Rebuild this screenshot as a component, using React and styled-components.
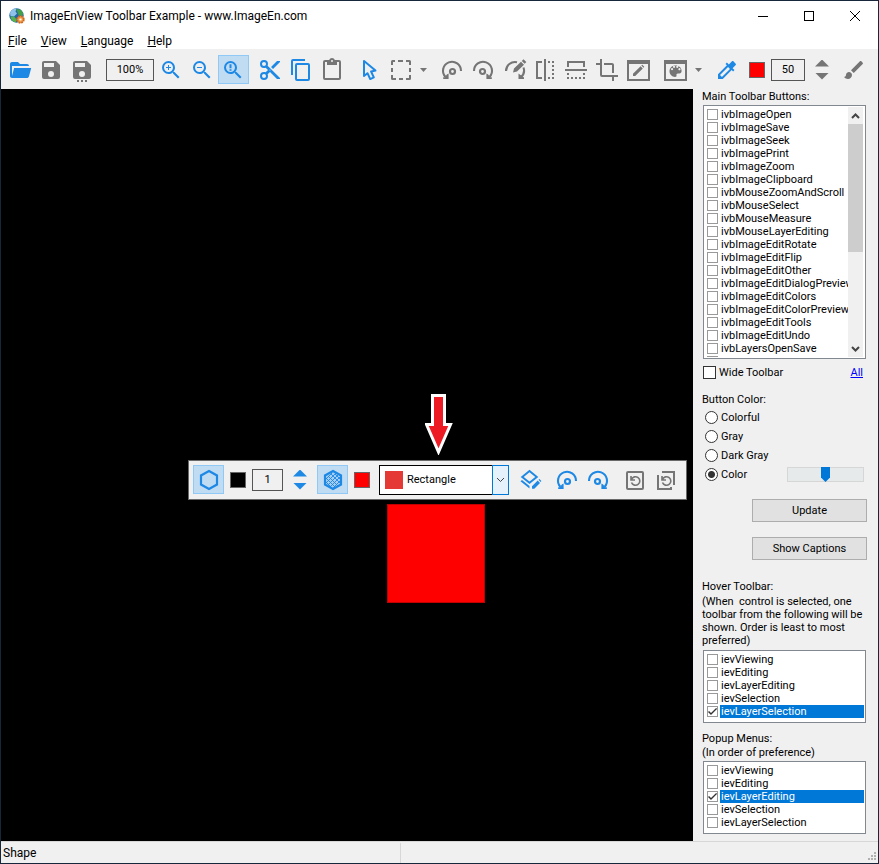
import { useState } from "react";
import styled, { createGlobalStyle, css } from "styled-components";

const BLUE = "#1e88e5";
const GRAY = "#757575";

const GlobalStyle = createGlobalStyle`
  * {
    box-sizing: border-box;
  }
  body {
    margin: 0;
    font-family: Roboto, "Liberation Sans", sans-serif;
    font-size: 11px;
    line-height: 13px;
    color: #000;
  }
  button, input, select {
    font: inherit;
    color: inherit;
    margin: 0;
    padding: 0;
  }
`;

const Window = styled.div`
  display: flex;
  flex-direction: column;
  min-height: 100vh;
  border: 1px solid #17263a;
  background-color: #f0f0f0;
`;

const TitleBar = styled.header`
  display: flex;
  align-items: center;
  height: 30px;
  padding-left: 8px;
  background-color: #fff;
`;

const Title = styled.h1`
  flex: 1;
  margin: 0 0 0 5px;
  font-size: 12px;
  font-weight: 400;
  line-height: 16px;
`;

const WindowButton = styled.button`
  display: flex;
  align-items: center;
  justify-content: center;
  width: 46px;
  height: 30px;
  border: 0;
  background: none;
`;

const MenuBar = styled.nav`
  display: flex;
  align-items: center;
  gap: 14px;
  height: 18px;
  padding: 2px 0 0 7px;
  background-color: #fff;
  font-size: 12px;
  line-height: 16px;
`;

const MenuItem = styled.button`
  border: 0;
  background: none;
  &::first-letter {
    text-decoration: underline;
  }
`;

const Toolbar = styled.div`
  display: flex;
  align-items: center;
  gap: 6px;
  height: 40px;
  padding: 6px 4px 5px;
`;

const Group = styled.div`
  display: flex;
  align-items: center;
  gap: ${(p) => p.$gap || 0}px;
  padding-left: ${(p) => p.$left || 0}px;
`;

const ToolButton = styled.button`
  display: flex;
  width: 31px;
  height: 29px;
  padding: 2px;
  border: 1px solid ${(p) => (p.$active ? "#90c8f6" : "transparent")};
  background-color: ${(p) => (p.$active ? "#c0dcf3" : "transparent")};
  color: ${(p) => (p.$gray ? GRAY : BLUE)};
`;

const DropButton = styled.button`
  display: flex;
  align-items: center;
  justify-content: center;
  width: 15px;
  height: 29px;
  border: 0;
  background: none;
  color: ${GRAY};
`;

const ValueBox = styled.input`
  width: ${(p) => p.$width}px;
  height: 22px;
  border: 1px solid #555;
  background-color: #f0f0f0;
  text-align: center;
`;

const Swatch = styled.button`
  width: 16px;
  height: 16px;
  border: 1px solid #666;
  background-color: ${(p) => p.$color};
`;

const Spinner = styled.div`
  display: flex;
  flex-direction: column;
  gap: 6px;
  margin: 0 4px;
  color: ${(p) => (p.$gray ? GRAY : BLUE)};
`;

const SpinButton = styled.button`
  width: 14px;
  height: 7px;
  border: 0;
  background-color: currentColor;
  color: inherit;
  clip-path: ${(p) =>
    p.$down
      ? "polygon(0 0, 100% 0, 50% 100%)"
      : "polygon(50% 0, 100% 100%, 0 100%)"};
`;

const Main = styled.main`
  display: flex;
  flex: 1;
`;

const Canvas = styled.section`
  position: relative;
  flex: 1;
  min-width: 0;
  overflow: hidden;
  background-color: #000;
`;

const Shape = styled.div`
  position: absolute;
  left: 386px;
  top: 415px;
  width: 98px;
  height: 99px;
  border: 1px solid #c00000;
  background-color: #f00;
`;

const Pointer = styled.svg`
  position: absolute;
  left: 424px;
  top: 305px;
`;

const HoverToolbar = styled.div`
  position: absolute;
  left: 187px;
  top: 371px;
  display: flex;
  align-items: center;
  gap: 6px;
  height: 40px;
  padding: 4px 4px 5px;
  border: 1px solid #696969;
  background-color: #f0f0f0;
`;

const Combo = styled.label`
  display: flex;
  align-items: center;
  width: 130px;
  height: 30px;
  margin-left: 3px;
  border: 1px solid #000;
  background-color: #fff;
`;

const ComboColor = styled.span`
  width: 18px;
  height: 18px;
  margin: 0 4px 0 5px;
  background-color: #e53935;
`;

const ComboSelect = styled.select`
  flex: 1;
  min-width: 0;
  height: 28px;
  border: 0;
  outline: 0;
  appearance: none;
  background: none;
`;

const ComboArrow = styled.span`
  display: flex;
  align-items: center;
  justify-content: center;
  width: 17px;
  height: 30px;
  margin-right: -1px;
  border: 1px solid #0078d7;
  background-color: #e5f1fb;
`;

const Side = styled.aside`
  display: flex;
  flex-direction: column;
  width: 185px;
  padding: 1px 11px 7px 9px;
`;

const Label = styled.div`
  margin-top: ${(p) => p.$top || 0}px;
`;

const ListBox = styled.div`
  display: flex;
  height: ${(p) => p.$height}px;
  width: 163px;
  margin: ${(p) => p.$top}px 0 0 1px;
  padding: 1px;
  border: 1px solid #828790;
  background-color: #fff;
`;

const List = styled.ul`
  flex: 1;
  min-width: 0;
  margin: 0;
  padding: 1px 0 0;
  overflow: hidden;
  list-style: none;
`;

const ListRow = styled.label`
  display: flex;
  align-items: center;
  gap: 2px;
  height: 13px;
  padding-left: 2px;
  white-space: nowrap;
`;

const ListText = styled.span`
  flex: 1;
  padding-left: 1px;
  ${(p) =>
    p.$selected &&
    css`
      background-color: #0078d7;
      color: #fff;
    `}
`;

const tick = `url("data:image/svg+xml,%3Csvg xmlns='http://www.w3.org/2000/svg' viewBox='0 0 9 9'%3E%3Cpath d='M0.500 4.500l2.500 2.600L8.600 1.400' fill='none' stroke='%23333' stroke-width='1.4'/%3E%3C/svg%3E")`;

const Check = styled.input.attrs({ type: "checkbox" })`
  flex: none;
  appearance: none;
  width: ${(p) => p.$size || 11}px;
  height: ${(p) => p.$size || 11}px;
  border: 1px solid ${(p) => (p.$size ? "#333" : "#999")};
  background-color: #fff;
  &:checked {
    background-image: ${tick};
  }
`;

const ScrollBar = styled.div`
  display: flex;
  flex-direction: column;
  width: 15px;
  margin-right: 1px;
  background-color: #f0f0f0;
`;

const ScrollButton = styled.button`
  display: flex;
  align-items: center;
  justify-content: center;
  height: 17px;
  border: 0;
  background: none;
`;

const ScrollTrack = styled.div`
  flex: 1;
`;

const ScrollThumb = styled.div`
  height: 128px;
  background-color: #cdcdcd;
`;

const WideRow = styled.div`
  display: flex;
  align-items: center;
  justify-content: space-between;
  height: 13px;
  margin: 7px 4px 0 1px;
`;

const WideLabel = styled.label`
  display: flex;
  align-items: center;
  gap: 3px;
`;

const AllLink = styled.a`
  color: #00f;
`;

const ColorList = styled.div`
  margin-top: 2px;
`;

const ColorRow = styled.div`
  display: flex;
  align-items: center;
  justify-content: space-between;
  height: 19px;
  padding: 0 3px;
`;

const RadioLabel = styled.label`
  display: flex;
  align-items: center;
  gap: 3px;
`;

const Radio = styled.input.attrs({ type: "radio" })`
  appearance: none;
  width: 13px;
  height: 13px;
  border: 1px solid #333;
  border-radius: 50%;
  background-color: #fff;
  &:checked {
    background-image: radial-gradient(circle, #333 3px, transparent 4px);
  }
`;

const Slider = styled.input.attrs({ type: "range" })`
  appearance: none;
  width: 77px;
  height: 15px;
  border: 1px solid #d6d6d6;
  background-color: #e7eaea;
  &::-webkit-slider-thumb {
    appearance: none;
    width: 9px;
    height: 15px;
    background-color: #0078d7;
    clip-path: polygon(0 0, 100% 0, 100% 70%, 50% 100%, 0 70%);
  }
`;

const PushButton = styled.button`
  align-self: flex-end;
  width: 115px;
  height: 23px;
  margin: 15px 0 0;
  border: 1px solid #adadad;
  background-color: #e1e1e1;
`;

const Hint = styled.p`
  margin: ${(p) => p.$top}px 0 0;
  white-space: pre-wrap;
`;

const StatusBar = styled.footer`
  display: flex;
  align-items: center;
  height: 22px;
  border-top: 1px solid #d7d7d7;
`;

const StatusText = styled.div`
  width: 400px;
  padding: 3px 2px;
  border-right: 1px solid #d7d7d7;
  font-size: 12px;
  line-height: 14px;
`;

const Grip = styled.svg`
  align-self: flex-end;
  margin-left: auto;
`;

const SAVE =
  "M15,9H5V5H15M12,19A3,3 0 0,1 9,16A3,3 0 0,1 12,13A3,3 0 0,1 15,16A3,3 0 0,1 12,19M17,3H5C3.89,3 3,3.9 3,5V19A2,2 0 0,0 5,21H19A2,2 0 0,0 21,19V7L17,3Z";
const LENS =
  "M15.5,14L20.5,19L19,20.5L14,15.5V14.71L13.73,14.43C12.59,15.41 11.11,16 9.5,16A6.5,6.5 0 0,1 3,9.5A6.5,6.5 0 0,1 9.5,3A6.5,6.5 0 0,1 16,9.5C16,11.11 15.41,12.59 14.43,13.73L14.71,14H15.5M9.5,14C12,14 14,12 14,9.5C14,7 12,5 9.5,5C7,5 5,7 5,9.5C5,12 7,14 9.5,14";
const HEXAGON = "M13 3L21 7.5V16.500L13 21L5 16.500V7.500Z";

const paths = {
  open: "M19,20H4C2.89,20 2,19.1 2,18V6C2,4.89 2.89,4 4,4H10L12,6H19A2,2 0 0,1 21,8H4V18L6.14,10H23.21L20.93,18.5C20.7,19.37 19.92,20 19,20Z",
  save: SAVE,
  saveAs: SAVE + "M7 22h2v2H7zM11 22h2v2h-2zM15 22h2v2h-2z",
  zoomIn: LENS + "M12,10H10V12H9V10H7V9H9V7H10V9H12V10Z",
  zoomOut: LENS + "M7,9H12V10H7V9Z",
  zoomReset: LENS + "M8.5 6.3h2v4h-2zM8.5 11.2h2v1.6h-2z",
  cut: "M19,3L13,9L15,11L22,4V3M12,12.5A0.5,0.5 0 0,1 11.5,12A0.5,0.5 0 0,1 12,11.5A0.5,0.5 0 0,1 12.5,12A0.5,0.5 0 0,1 12,12.5M6,20A2,2 0 0,1 4,18C4,16.89 4.9,16 6,16A2,2 0 0,1 8,18C8,19.11 7.1,20 6,20M6,8A2,2 0 0,1 4,6C4,4.89 4.9,4 6,4A2,2 0 0,1 8,6C8,7.11 7.1,8 6,8M9.64,7.64C9.87,7.14 10,6.59 10,6A4,4 0 0,0 6,2A4,4 0 0,0 2,6A4,4 0 0,0 6,10C6.59,10 7.14,9.87 7.64,9.64L10,12L7.64,14.36C7.14,14.13 6.59,14 6,14A4,4 0 0,0 2,18A4,4 0 0,0 6,22A4,4 0 0,0 10,18C10,17.41 9.87,16.86 9.64,16.36L12,14L19,21H22V20L9.64,7.64Z",
  copy: "M19,21H8V7H19M19,5H8A2,2 0 0,0 6,7V21A2,2 0 0,0 8,23H19A2,2 0 0,0 21,21V7A2,2 0 0,0 19,5M16,1H4A2,2 0 0,0 2,3V17H4V3H16V1Z",
  paste:
    "M19,20H5V4H7V7H17V4H19M12,2A1,1 0 0,1 13,3A1,1 0 0,1 12,4A1,1 0 0,1 11,3A1,1 0 0,1 12,2M19,2H14.82C14.4,0.84 13.3,0 12,0C10.7,0 9.6,0.84 9.18,2H5A2,2 0 0,0 3,4V20A2,2 0 0,0 5,22H19A2,2 0 0,0 21,20V4A2,2 0 0,0 19,2Z",
  pointer:
    "M10.07,14.27C10.57,14.03 11.16,14.25 11.4,14.75L13.7,19.74L15.5,18.89L13.19,13.91C12.95,13.41 13.17,12.81 13.67,12.58L13.95,12.5L16.25,12.05L8,5.12V15.9L9.82,14.43L10.07,14.27M13.64,21.97C13.14,22.21 12.54,22 12.31,21.5L10.13,16.76L7.62,18.78C7.45,18.92 7.24,19 7,19A1,1 0 0,1 6,18V3A1,1 0 0,1 7,2C7.24,2 7.47,2.09 7.64,2.23L7.65,2.22L19.14,11.86C19.57,12.22 19.62,12.85 19.27,13.27C19.12,13.45 18.91,13.57 18.7,13.61L15.54,14.23L17.74,18.96C18,19.46 17.76,20.05 17.26,20.28L13.64,21.97Z",
  select:
    "M3 7V3.500Q3 2 4.500 2H7V4H5V7ZM10 2H15V4H10ZM18 2H21.500Q23 2 23 3.500V7H21V4H18ZM3 10H5V14H3ZM21 10H23V14H21ZM3 17H5V20H8V22H4.500Q3 22 3 20.500ZM11 20H15V22H11ZM23 17V20.500Q23 22 21.500 22H18V20H21V17Z",
  flipH:
    "M3 3H9V5H5V19H9V21H3ZM11 1H13V23H11ZM15 3h2v2h-2zM19 3h2v2h-2zM19 7h2v2h-2zM19 11h2v2h-2zM19 15h2v2h-2zM19 19h2v2h-2zM15 19h2v2h-2z",
  flipV:
    "M3 9V3H21V9H19V5H5V9ZM1 11H23V13H1ZM3 15h2v2H3zM3 19h2v2H3zM7 19h2v2H7zM11 19h2v2h-2zM15 19h2v2h-2zM19 19h2v2h-2zM19 15h2v2h-2z",
  crop: "M7,17V1H5V5H1V7H5V17A2,2 0 0,0 7,19H17V23H19V19H23V17M17,15H19V7C19,5.89 18.1,5 17,5H9V7H17V15Z",
  effects:
    "M1 2H24V23H1ZM3 6V21H22V6ZM7 18V15.8L14.6 8.200L16.800 10.400L9.200 18ZM15.300 7.500L16.300 6.700L18.300 8.700L17.500 9.700Z",
  palette:
    "M1 2H24V23H1ZM3 6V21H22V6ZM12.500 7.500C8.600 7.500 6.500 10.400 6.500 13.300C6.500 16.600 9.200 19 12 19C13.300 19 13.800 18.300 13.500 17.300C13.200 16.200 13.800 15.500 14.800 15.500H16.300C17.800 15.500 18.600 14.500 18.600 13C18.600 9.800 16 7.500 12.500 7.500ZM9 12.200a1.100 1.100 0 1 1 .1 0zM11 9.900a1.100 1.100 0 1 1 .1 0zM14.200 9.900a1.100 1.100 0 1 1 .1 0zM16.400 12.300a1.100 1.100 0 1 1 .1 0z",
  dropper:
    "M20.71 5.63l-2.34-2.34c-.39-.39-1.02-.39-1.41 0l-3.12 3.12-1.93-1.91-1.41 1.41 1.42 1.42L3 16.25V21h4.75l8.92-8.92 1.42 1.42 1.41-1.41-1.92-1.92 3.12-3.12c.4-.4.4-1.03.01-1.42zM6.92 19L5 17.08l8.06-8.06 1.92 1.92L6.92 19z",
  brush:
    "M7 14c-1.66 0-3 1.34-3 3 0 1.31-1.16 2-2 2 .92 1.22 2.49 2 4 2 2.21 0 4-1.79 4-4 0-1.66-1.34-3-3-3zm13.71-9.37l-1.34-1.34c-.39-.39-1.02-.39-1.41 0L9 12.25 11.75 15l8.96-8.96c.39-.39.39-1.02 0-1.41z",
};

// icons that need strokes as well as fills
const drawings = {
  rotateLeft: (
    <>
      <path d="M21 13A9 9 0 1 0 5.500 19" fill="none" stroke="currentColor" strokeWidth="2.100" />
      <path d="M8.600 15.500V21H3.200V19.300H5L6.800 16.500Z" />
      <circle cx="12.500" cy="13.500" r="2.500" fill="none" stroke="currentColor" strokeWidth="2.200" />
    </>
  ),
  rotateRight: (
    <>
      <path d="M3 13A9 9 0 1 1 18.500 19" fill="none" stroke="currentColor" strokeWidth="2.100" />
      <path d="M15.400 15.500V21H20.800V19.300H19L17.200 16.500Z" />
      <circle cx="11.500" cy="13.500" r="2.500" fill="none" stroke="currentColor" strokeWidth="2.200" />
    </>
  ),
  rotateFree: (
    <>
      <path d="M4 13A9 9 0 0 1 15 4.200M21.500 9.500A9 9 0 0 1 18.500 19.500" fill="none" stroke="currentColor" strokeWidth="2.100" />
      <path d="M16.500 15.500V21H22V19.500L18.500 17ZM11 14.500L12 10.500L19 3.800L22 6.700L15 13.500ZM19.800 3L21.500 1.300L24.300 4L22.700 5.800Z" />
    </>
  ),
  hexagon: <path d={HEXAGON} fill="none" stroke="currentColor" strokeWidth="2.200" />,
  hexagonFill: (
    <>
      <path d={HEXAGON} fill="#a6cef0" stroke="currentColor" strokeWidth="2.200" />
      <path
        d="M6 11L12 5M6 15L16 5M7 18L19 6M10 19L20 9M13 20L20 13M6 14L11 19M6 10L15 19M8 8L18 18M11 6L20 15M15 6L20 11"
        fill="none"
        stroke="currentColor"
        strokeWidth="0.900"
      />
    </>
  ),
  layers: (
    <>
      <path d="M11.500 3L18.800 9L11.500 14.800L4.200 9Z" fill="none" stroke="currentColor" strokeWidth="1.900" />
      <path d="M2.500 13.300L4 12L11.500 18V20.500ZM14 20.800V18.300L19.700 12.600L22 14.900L16.300 20.800ZM20.500 11.800L21.400 11L23.400 13L22.600 13.900Z" />
    </>
  ),
  reset: (
    <>
      <rect x="4" y="4" width="16" height="17" rx="1" fill="none" stroke="currentColor" strokeWidth="2" />
      <path d="M8 8V12H12M8.500 11.500A4.300 4.300 0 1 1 8.500 14.500" fill="none" stroke="currentColor" strokeWidth="1.600" />
    </>
  ),
  resetAll: (
    <>
      <path d="M8 4H20V17M4 7V21H17V19" fill="none" stroke="currentColor" strokeWidth="2" />
      <path d="M8 8V12H12M8.500 11.500A4.300 4.300 0 1 1 8.500 14.500" fill="none" stroke="currentColor" strokeWidth="1.600" />
    </>
  ),
};

const Icon = ({ name }) => (
  <svg width="24" height="24" viewBox="0 0 24 24" fill="currentColor" fillRule="evenodd" overflow="visible">
    {drawings[name] || <path d={paths[name]} />}
  </svg>
);

const Tool = ({ name, title, gray, active }) => (
  <ToolButton $gray={gray} $active={active} title={title} aria-label={title}>
    <Icon name={name} />
  </ToolButton>
);

const Drop = ({ title }) => (
  <DropButton aria-label={title}>
    <svg width="7" height="4" viewBox="0 0 7 4" fill="currentColor">
      <path d="M0 0H7L3.500 4Z" />
    </svg>
  </DropButton>
);

const Chevron = ({ up, width = 2 }) => (
  <svg width="9" height="6" viewBox="0 0 9 6" fill="none" stroke="#444" strokeWidth={width}>
    <path d={up ? "M1 5L4.500 1.500L8 5" : "M1 1L4.500 4.500L8 1"} />
  </svg>
);

const Spin = ({ gray, label }) => (
  <Spinner $gray={gray}>
    <SpinButton aria-label={`Increase ${label}`} />
    <SpinButton $down aria-label={`Decrease ${label}`} />
  </Spinner>
);

const Logo = () => (
  <svg width="16" height="16" viewBox="0 0 16 16">
    <circle cx="7.500" cy="7.500" r="7.200" fill="#2367a8" />
    <path d="M1 5C2 2 5 0.500 7.500 0.600L6.500 3.500L8 5.500L5 8.500L1.500 8Z" fill="#8fc2e8" />
    <path d="M7 1.200L11.500 1.500L14.200 5L13.200 8.500L9.500 7L8.500 4Z" fill="#42a047" />
    <path d="M1.500 8.500L5 8.500L8 12L6.500 14.500C4 14 2 12 1.500 8.500Z" fill="#57b14d" />
    <circle cx="11.500" cy="11.500" r="3.400" fill="#f6b56c" stroke="#d0651b" strokeWidth="1.600" strokeDasharray="1.800 0.900" />
    <circle cx="11.500" cy="11.500" r="2.700" fill="#f3a250" stroke="#cf6a20" strokeWidth="0.600" />
    <circle cx="11.500" cy="11.500" r="1.100" fill="#fff" />
  </svg>
);

const toolbarSets = [
  "ivbImageOpen",
  "ivbImageSave",
  "ivbImageSeek",
  "ivbImagePrint",
  "ivbImageZoom",
  "ivbImageClipboard",
  "ivbMouseZoomAndScroll",
  "ivbMouseSelect",
  "ivbMouseMeasure",
  "ivbMouseLayerEditing",
  "ivbImageEditRotate",
  "ivbImageEditFlip",
  "ivbImageEditOther",
  "ivbImageEditDialogPreview",
  "ivbImageEditColors",
  "ivbImageEditColorPreview",
  "ivbImageEditTools",
  "ivbImageEditUndo",
  "ivbLayersOpenSave",
  "ivbLayersEdit",
];

const modes = [
  "ievViewing",
  "ievEditing",
  "ievLayerEditing",
  "ievSelection",
  "ievLayerSelection",
];

function CheckList({ items, initial, top, height, scroll }) {
  const [checked, setChecked] = useState(initial ? [initial] : []);
  const toggle = (item) =>
    setChecked((list) =>
      list.includes(item) ? list.filter((i) => i !== item) : [...list, item]
    );

  return (
    <ListBox $top={top} $height={height}>
      <List>
        {items.map((item) => (
          <li key={item}>
            <ListRow>
              <Check
                checked={checked.includes(item)}
                onChange={() => toggle(item)}
              />
              <ListText $selected={item === initial}>{item}</ListText>
            </ListRow>
          </li>
        ))}
      </List>
      {scroll && (
        <ScrollBar>
          <ScrollButton aria-label="Scroll up">
            <Chevron up />
          </ScrollButton>
          <ScrollTrack>
            <ScrollThumb />
          </ScrollTrack>
          <ScrollButton aria-label="Scroll down">
            <Chevron />
          </ScrollButton>
        </ScrollBar>
      )}
    </ListBox>
  );
}

function MainToolbar() {
  return (
    <Toolbar>
      <Group>
        <Tool name="open" title="Open" />
        <Tool name="save" title="Save" gray />
        <Tool name="saveAs" title="Save As" gray />
      </Group>
      <Group $gap={2} $left={2}>
        <ValueBox $width={48} defaultValue="100%" aria-label="Zoom" />
        <Group>
          <Tool name="zoomIn" title="Zoom In" />
          <Tool name="zoomOut" title="Zoom Out" />
          <Tool name="zoomReset" title="Actual Size" active />
        </Group>
      </Group>
      <Group>
        <Tool name="cut" title="Cut" />
        <Tool name="copy" title="Copy" />
        <Tool name="paste" title="Paste" gray />
      </Group>
      <Group>
        <Tool name="pointer" title="Move" />
        <Tool name="select" title="Select" gray />
        <Drop title="Selection types" />
      </Group>
      <Group>
        <Tool name="rotateLeft" title="Rotate Left" gray />
        <Tool name="rotateRight" title="Rotate Right" gray />
        <Tool name="rotateFree" title="Custom Rotate" gray />
        <Tool name="flipH" title="Flip Horizontal" gray />
        <Tool name="flipV" title="Flip Vertical" gray />
        <Tool name="crop" title="Crop" gray />
        <Tool name="effects" title="Effects" gray />
      </Group>
      <Group>
        <Tool name="palette" title="Colors" gray />
        <Drop title="Color types" />
      </Group>
      <Group $gap={6}>
        <Tool name="dropper" title="Pick Color" />
        <Swatch $color="#f00" aria-label="Brush color" />
        <ValueBox $width={34} defaultValue="50" aria-label="Brush size" />
        <Spin gray label="brush size" />
        <Tool name="brush" title="Brush" gray />
      </Group>
    </Toolbar>
  );
}

function ShapeToolbar() {
  return (
    <HoverToolbar>
      <Tool name="hexagon" title="Outline" active />
      <Swatch $color="#000" aria-label="Outline color" />
      <ValueBox $width={31} defaultValue="1" aria-label="Outline width" />
      <Spin label="outline width" />
      <Tool name="hexagonFill" title="Fill" active />
      <Swatch $color="#f00" aria-label="Fill color" />
      <Combo>
        <ComboColor />
        <ComboSelect aria-label="Shape" defaultValue="Rectangle">
          <option>Rectangle</option>
          <option>Ellipse</option>
        </ComboSelect>
        <ComboArrow>
          <Chevron width={1} />
        </ComboArrow>
      </Combo>
      <Tool name="layers" title="Edit Layer" />
      <Group>
        <Tool name="rotateLeft" title="Rotate Left" />
        <Tool name="rotateRight" title="Rotate Right" />
      </Group>
      <Group>
        <Tool name="reset" title="Reset" gray />
        <Tool name="resetAll" title="Reset All" gray />
      </Group>
    </HoverToolbar>
  );
}

function App() {
  const [color, setColor] = useState("Color");

  return (
    <Window>
      <GlobalStyle />
      <TitleBar>
        <Logo />
        <Title>ImageEnView Toolbar Example - www.ImageEn.com</Title>
        <WindowButton aria-label="Minimize">
          <svg width="10" height="10" stroke="#000">
            <path d="M0 5.500H10" />
          </svg>
        </WindowButton>
        <WindowButton aria-label="Maximize">
          <svg width="10" height="10" stroke="#000" fill="none">
            <rect x="0.500" y="0.500" width="9" height="9" />
          </svg>
        </WindowButton>
        <WindowButton aria-label="Close">
          <svg width="10" height="10" stroke="#000">
            <path d="M0 0L10 10M10 0L0 10" />
          </svg>
        </WindowButton>
      </TitleBar>
      <MenuBar>
        {["File", "View", "Language", "Help"].map((m) => (
          <MenuItem key={m}>{m}</MenuItem>
        ))}
      </MenuBar>
      <MainToolbar />
      <Main>
        <Canvas>
          <Shape />
          <Pointer width="28" height="61" viewBox="0 0 28 61">
            <path d="M7.500 1.500H19.500V30.500H25.500L13.500 58L1.500 30.500H7.500Z" fill="#ed1c24" stroke="#fff" strokeWidth="3" />
          </Pointer>
          <ShapeToolbar />
        </Canvas>
        <Side>
          <Label>Main Toolbar Buttons:</Label>
          <CheckList items={toolbarSets} top={2} height={254} scroll />
          <WideRow>
            <WideLabel>
              <Check $size={13} />
              Wide Toolbar
            </WideLabel>
            <AllLink href="#all">All</AllLink>
          </WideRow>
          <Label $top={14}>Button Color:</Label>
          <ColorList>
            {["Colorful", "Gray", "Dark Gray", "Color"].map((c) => (
              <ColorRow key={c}>
                <RadioLabel>
                  <Radio
                    name="color"
                    checked={color === c}
                    onChange={() => setColor(c)}
                  />
                  {c}
                </RadioLabel>
                {c === "Color" && <Slider aria-label="Hue" defaultValue="50" />}
              </ColorRow>
            ))}
          </ColorList>
          <PushButton>Update</PushButton>
          <PushButton>Show Captions</PushButton>
          <Label $top={20}>Hover Toolbar:</Label>
          <Hint $top={2}>
            {"(When  control is selected, one toolbar from the following will be shown. Order is least to most preferred)"}
          </Hint>
          <CheckList items={modes} initial="ievLayerSelection" top={3} height={73} />
          <Label $top={9}>Popup Menus:</Label>
          <Hint $top={1}>(In order of preference)</Hint>
          <CheckList items={modes} initial="ievLayerEditing" top={2} height={73} />
        </Side>
      </Main>
      <StatusBar>
        <StatusText>Shape</StatusText>
        <Grip width="12" height="12" fill="#b0b0b0">
          <path d="M8 1h2v2H8zM5 4h2v2H5zM8 4h2v2H8zM2 7h2v2H2zM5 7h2v2H5zM8 7h2v2H8z" />
        </Grip>
      </StatusBar>
    </Window>
  );
}

export default App;
